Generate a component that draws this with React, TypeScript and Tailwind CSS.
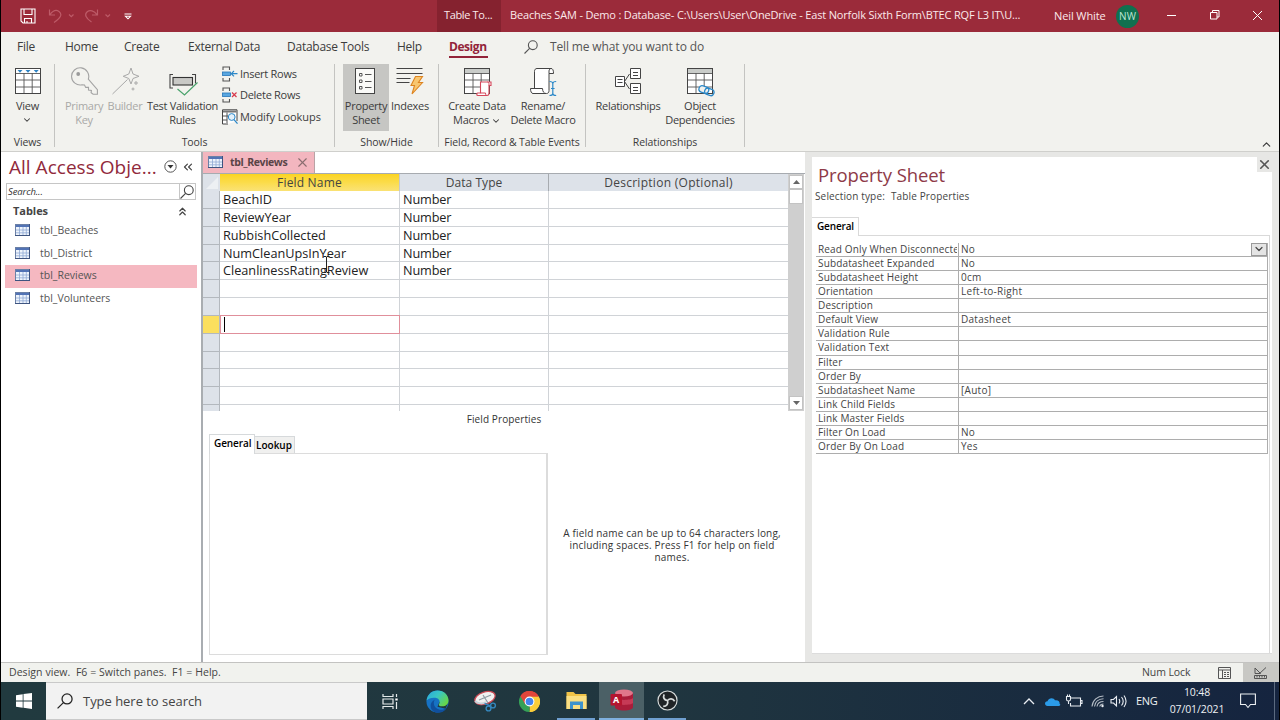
import type { ReactNode } from "react";
import { ChevronDown, ChevronUp, ChevronsLeft, ChevronsUp, X } from "lucide-react";

const fields = [
  { name: "BeachID", type: "Number" },
  { name: "ReviewYear", type: "Number" },
  { name: "RubbishCollected", type: "Number" },
  { name: "NumCleanUpsInYear", type: "Number" },
  { name: "CleanlinessRatingReview", type: "Number" },
  { name: "", type: "" },
  { name: "", type: "" },
  { name: "", type: "", current: true },
  { name: "", type: "" },
  { name: "", type: "" },
  { name: "", type: "" },
  { name: "", type: "" },
  { name: "", type: "" },
];

const properties = [
  ["Read Only When Disconnecte", "No"],
  ["Subdatasheet Expanded", "No"],
  ["Subdatasheet Height", "0cm"],
  ["Orientation", "Left-to-Right"],
  ["Description", ""],
  ["Default View", "Datasheet"],
  ["Validation Rule", ""],
  ["Validation Text", ""],
  ["Filter", ""],
  ["Order By", ""],
  ["Subdatasheet Name", "[Auto]"],
  ["Link Child Fields", ""],
  ["Link Master Fields", ""],
  ["Filter On Load", "No"],
  ["Order By On Load", "Yes"],
];

const tables = ["tbl_Beaches", "tbl_District", "tbl_Reviews", "tbl_Volunteers"];

/* ---------- icons ---------- */

function TableIcon() {
  return (
    <svg width="15" height="12" viewBox="0 0 15 12" className="mb-0.5 shrink-0">
      <rect x="0.5" y="0.5" width="14" height="11" fill="#eef4fc" stroke="#6b80a6" />
      <rect x="1" y="1" width="13" height="2" fill="#5273b5" />
      <path d="M1 6h13M1 8.8h13M4.5 3V11M8 3V11M11.3 3V11" stroke="#8fa9d4" strokeWidth="0.8" />
      <path d="M0 11.5h15M14.5 0v12" stroke="#3e5480" />
    </svg>
  );
}

function SearchIcon({ size = 14, color = "#444" }: { size?: number; color?: string }) {
  return (
    <svg width={size} height={size} viewBox="0 0 14 14" fill="none" stroke={color} strokeWidth="1.1">
      <circle cx="8.8" cy="5.2" r="4.4" />
      <path d="M5.6 8.4 0.5 13.5" />
    </svg>
  );
}

function GridIcon({ children, header = "#c9ccc9" }: { children?: ReactNode; header?: string }) {
  return (
    <svg width="30" height="30" viewBox="0 0 30 30" fill="none">
      <rect x="2.5" y="1.5" width="25" height="25" fill="#fff" stroke="#444" />
      <rect x="3" y="2" width="24" height="4" fill={header} />
      <path d="M3 6.5h24M3 13h24M3 20h24M11 6v20M19.200 6v20" stroke="#555" strokeWidth="0.9" />
      {children}
    </svg>
  );
}

function ViewIcon() {
  return (
    <GridIcon header="#fff">
      <path d="M4.500 3h5L7 5.800zM12.500 3h5L15 5.800zM20.700 3h5l-2.500 2.800z" fill="#2d83c4" />
    </GridIcon>
  );
}

function KeyIcon() {
  return (
    <svg width="30" height="30" viewBox="0 0 30 30" fill="none" stroke="#a3a3a3" strokeWidth="1.1">
      <path d="M19.300 12.200A8.600 8.600 0 1 0 13 17.800l2.500.2 1.200 2.400 2.800-.1v2.800l2.900.4-.3 2.200 2 1.600h4.300v-4.600z" />
      <circle cx="9.200" cy="7" r="1.900" fill="#9a9a9a" stroke="none" />
    </svg>
  );
}

function BuilderIcon() {
  return (
    <svg width="30" height="30" viewBox="0 0 30 30" fill="none" stroke="#a9a9a9" strokeWidth="1">
      <path d="M21 1l2 6 6 2.300-6 2.200-2 5.500-2.200-5.500-5.600-2.200 5.600-2.300z" />
      <path d="M17.500 12.500 2.500 27" />
      <path d="M26 14v4M24 16h4M23 20.500v3M21.500 22h3" />
    </svg>
  );
}

function ValidationIcon() {
  return (
    <svg width="30" height="30" viewBox="0 0 30 30" fill="none">
      <path d="M5 7.500H2v13.500h3M24 7.500h3.500v9" stroke="#444" strokeWidth="1.1" />
      <rect x="5" y="10.500" width="19.500" height="7.500" fill="#c9c9c6" stroke="#333" strokeWidth="1.1" />
      <path d="M9.500 22l7 6 13-12.500" stroke="#4aa36c" strokeWidth="1.2" />
    </svg>
  );
}

function RowsIcon({ remove = false }: { remove?: boolean }) {
  return (
    <svg width="16" height="16" viewBox="0 0 16 16" fill="none">
      <path d="M1 4V1h6.500v3M1 12v3h6.500v-3" stroke="#555" strokeWidth="1.1" />
      <rect x="0.5" y="6" width="8" height="3.5" fill="#5aa7e0" stroke="#2575b8" strokeWidth="0.8" />
      {remove ? (
        <path d="M10 5.500l4.500 4.500M14.500 5.500 10 10" stroke="#d8394c" strokeWidth="1.2" />
      ) : (
        <path d="M15.500 7.700H9.500M12 5 9.300 7.700 12 10.400" stroke="#2b88c8" strokeWidth="1.2" />
      )}
    </svg>
  );
}

function LookupIcon() {
  return (
    <svg width="16" height="16" viewBox="0 0 16 16" fill="none">
      <path d="M6 15H.5V.8h14.500V12" fill="#fff" stroke="#444" />
      <path d="M1 1.500h13.500v2H1z" fill="#777" />
      <path d="M1 7h5M1 11h4M5 3.500V14" stroke="#555" />
      <circle cx="9.700" cy="8" r="3.400" fill="#e4f1fb" stroke="#2b88c8" />
      <path d="M12 10.600l3.500 4" stroke="#2b88c8" strokeWidth="1.3" />
    </svg>
  );
}

function PropertyIcon() {
  return (
    <svg width="30" height="30" viewBox="0 0 30 30" fill="none">
      <rect x="4.5" y="1.5" width="19" height="25" fill="#fafaf8" stroke="#444" />
      <path d="M8.500 6.500h2.500V9H8.500zM8.500 13h2.500v2.500H8.500zM8.500 19.500h2.500V22H8.500z" stroke="#555" />
      <path d="M14 7.500h6.500M14 14.500h6.500M14 20.500h6.500" stroke="#555" />
    </svg>
  );
}

function IndexesIcon() {
  return (
    <svg width="30" height="30" viewBox="0 0 30 30" fill="none">
      <path d="M1.500 1.500h26M1.500 6.500h26M1.500 11.500h14M1.500 15.500h13" stroke="#444" strokeWidth="1.1" />
      <path d="M20.500 9.500h7l-4 6h4L17 27l2.500-8.500h-3.500z" fill="#f8c670" stroke="#dd8420" strokeWidth="1.1" />
    </svg>
  );
}

function MacrosIcon() {
  return (
    <GridIcon>
      <path
        d="M18.500 15H29v3.500h-2V26c0 2-1 2.500-2 2.500h-9.500c-1 0-1-2.500 0-2.500h3z"
        fill="#fff"
        stroke="#d5475b"
        strokeWidth="1.1"
      />
      <path d="M18.500 26h5c0 1.500.5 2.500 1.500 2.500M27 18.500V17c0-1-.5-2-1.500-2" stroke="#d5475b" />
    </GridIcon>
  );
}

function RenameIcon() {
  return (
    <svg width="30" height="30" viewBox="0 0 30 30" fill="none">
      <path
        d="M6.500 21.500V4.500c0-2 1-3 2.500-3h14c1.700 0 2.500 1.500 2.500 5H21v17c0 2-1 3-2.500 3H5c-1.500 0-2.500-2-2.500-5h12c0 3 1.500 5 3.500 5"
        fill="#fff"
        stroke="#444"
      />
      <path d="M21 6.500V4c0-1.500 1-2.500 2.500-2.500" stroke="#444" />
      <path
        d="M21.500 14.500c2 0 3.300.5 3.300 2v10c0 1.500-1.300 2-3.300 2M28.200 14.500c-2 0-3.400.5-3.400 2M24.800 26.500c0 1.500 1.400 2 3.400 2M23 21.500h3.600"
        stroke="#2b88c8"
        strokeWidth="1.2"
      />
    </svg>
  );
}

function RelationshipsIcon() {
  return (
    <svg width="30" height="30" viewBox="0 0 30 30" fill="none" stroke="#444">
      <path d="M2.500 9.500h9v10h-9zM17.500 1.500h10v10h-10zM17.500 16.500h10v10h-10z" fill="#fff" />
      <path d="M4.500 12.500h5M4.500 15.500h5M20 5.500h5M20 8.500h5M20 20.500h5M20 23.500h5M11.500 14.500l5-7.500M11.500 14.500l5 7.500" />
    </svg>
  );
}

function DependenciesIcon() {
  return (
    <GridIcon>
      <g fill="#f2f2ee" stroke="#2b88c8" strokeWidth="1.3">
        <rect x="14" y="19" width="10" height="6.5" rx="3.25" transform="rotate(20 18 22)" />
        <rect x="19.5" y="21.5" width="9.5" height="6.5" rx="3.25" fill="none" transform="rotate(20 24 25)" />
      </g>
    </GridIcon>
  );
}

/* ---------- title bar ---------- */

function TitleBar() {
  return (
    <div className="flex h-8 shrink-0 items-center bg-[#9b2b3a] text-[11px] text-[#fbe9eb]">
      <div className="flex w-[436px] items-center">
        <svg width="16" height="16" viewBox="0 0 16 16" fill="none" stroke="#fff" strokeWidth="1.1" className="ml-[19px]">
          <path d="M1 1h14v14H3l-2-2zM4 1v5.500h8V1M4.500 15v-4.500h7V15M7 13v2" />
        </svg>
        <svg width="26" height="16" viewBox="0 0 26 16" fill="none" stroke="#bd5b68" strokeWidth="1.2" className="ml-3">
          <path d="M1.500 1.500v5.500h5.500M1.800 6.800C5 2.500 8.500 1.700 11 3.500c3.500 2.700 2 6.500-5 11M21 6.500l2.300 2.200L25.500 6.500" />
        </svg>
        <svg width="27" height="16" viewBox="0 0 27 16" fill="none" stroke="#bd5b68" strokeWidth="1.2" className="ml-[10px]">
          <path d="M13.500 1.500v5.500H8M13.200 6.800C10 2.500 6 1.700 3.500 3.500 0 6.200 1.500 10 7.500 14M21.500 6.500l2.300 2.200L26 6.500" />
        </svg>
        <svg width="8" height="7" viewBox="0 0 8 7" fill="none" stroke="#fff" strokeWidth="1.1" className="ml-[13px]">
          <path d="M.5 1h7M1.500 3.300h5L4 5.800z" />
        </svg>
      </div>
      <div className="flex h-full w-16 items-center bg-[#85222f] pb-0.5 pl-[7px] font-medium tracking-[-0.35px] whitespace-nowrap">
        Table To...
      </div>
      <div className="ml-[9px] w-[530px] pb-0.5 tracking-[-0.17px] whitespace-nowrap">
        Beaches SAM - Demo : Database- C:\Users\User\OneDrive - East Norfolk Sixth Form\BTEC RQF L3 IT\U...
      </div>
      <div className="ml-[14px] w-[54px] tracking-[-0.1px] whitespace-nowrap">Neil White</div>
      <div className="ml-2 flex size-[23px] items-center justify-center rounded-full bg-[#10704f] text-[10px] text-[#bfe6d5]">
        NW
      </div>
      <svg width="100" height="12" viewBox="0 0 100 12" fill="none" stroke="#fff" className="mb-0.5 ml-[28px]">
        <path d="M0 6.500h9M43.500 3.500h6.500v6.500h-6.500zM45.500 3.500v-2h6.500v6.500h-2M86 2l9 9M95 2l-9 9" />
      </svg>
    </div>
  );
}

/* ---------- ribbon ---------- */

function RibbonTabs() {
  return (
    <div className="flex h-[29px] items-center text-[12px] tracking-[-0.25px] whitespace-nowrap text-[#3c3c3c]">
      <span className="ml-4 w-12">File</span>
      <span className="w-[59px]">Home</span>
      <span className="w-16">Create</span>
      <span className="w-[99px]">External Data</span>
      <span className="w-[110px]">Database Tools</span>
      <span className="w-[52px]">Help</span>
      <span className="flex h-[29px] w-[39px] flex-col font-bold tracking-[-0.45px] text-[#93243a]">
        <span className="mt-px flex h-[23px] items-center pt-1">Design</span>
        <span className="h-0.5 bg-[#93243a]" />
      </span>
      <span className="ml-9 w-[26px]">
        <SearchIcon color="#555" />
      </span>
      <span className="tracking-[-0.14px] text-[#555]">Tell me what you want to do</span>
    </div>
  );
}

function RibbonGroup({ label, className, children }: { label: string; className: string; children: ReactNode }) {
  return (
    <div className={`flex h-[83px] shrink-0 flex-col border-r border-[#c4c4c1] ${className}`}>
      <div className="flex h-[71px] shrink-0 items-start">{children}</div>
      <div className="text-center text-[10.5px] leading-[14px] tracking-[-0.08px] whitespace-nowrap">{label}</div>
    </div>
  );
}

function RibbonButton({
  icon,
  lines,
  className,
  menu,
}: {
  icon: ReactNode;
  lines: string[];
  className: string;
  menu?: boolean;
}) {
  return (
    <div className={`flex h-[67px] shrink-0 flex-col items-center pt-[3px] whitespace-nowrap ${className}`}>
      {icon}
      <div className="mt-px flex flex-col items-center">
        {lines.map((line, i) => (
          <span key={line} className="flex h-[14.5px] items-center leading-[15px]">
            {line}
            {menu && i === lines.length - 1 && i > 0 && (
              <ChevronDown size={10} strokeWidth={2.5} className="mt-0.5 ml-0.5" />
            )}
          </span>
        ))}
        {menu && lines.length === 1 && <ChevronDown size={10} strokeWidth={2.5} className="mt-0.5" />}
      </div>
    </div>
  );
}

function Ribbon() {
  return (
    <div className="flex h-[119px] shrink-0 flex-col bg-[#f2f2ee]">
      <RibbonTabs />
      <div className="mt-[3px] flex h-[87px] text-[11px] tracking-[-0.28px] text-[#3c3c3c]">
        <RibbonGroup label="Views" className="w-[54px]">
          <RibbonButton icon={<ViewIcon />} lines={["View"]} className="w-[53px]" menu />
        </RibbonGroup>
        <RibbonGroup label="Tools" className="w-[280px]">
          <RibbonButton icon={<KeyIcon />} lines={["Primary", "Key"]} className="ml-[9px] w-10 text-[#a9a9a7]" />
          <RibbonButton icon={<BuilderIcon />} lines={["Builder"]} className="ml-px w-10 text-[#a9a9a7]" />
          <RibbonButton icon={<ValidationIcon />} lines={["Test Validation", "Rules"]} className="w-[75px]" />
          <div className="-mt-px ml-0.5 flex flex-col whitespace-nowrap">
            <div className="flex h-[21.5px] items-center gap-0.5">
              <RowsIcon /> Insert Rows
            </div>
            <div className="flex h-[21.5px] items-center gap-0.5">
              <RowsIcon remove /> Delete Rows
            </div>
            <div className="flex h-[21.5px] items-center gap-0.5 tracking-[-0.05px]">
              <LookupIcon /> Modify Lookups
            </div>
          </div>
        </RibbonGroup>
        <RibbonGroup label="Show/Hide" className="w-[104px]">
          <RibbonButton icon={<PropertyIcon />} lines={["Property", "Sheet"]} className="ml-2 w-[46px] bg-[#c6c6c3]" />
          <RibbonButton icon={<IndexesIcon />} lines={["Indexes"]} className="w-[42px]" />
        </RibbonGroup>
        <RibbonGroup label="Field, Record & Table Events" className="w-[147px]">
          <RibbonButton icon={<MacrosIcon />} lines={["Create Data", "Macros"]} className="ml-2 w-[60px]" menu />
          <RibbonButton icon={<RenameIcon />} lines={["Rename/", "Delete Macro"]} className="ml-0.5 w-[68px]" />
        </RibbonGroup>
        <RibbonGroup label="Relationships" className="w-[159px]">
          <RibbonButton icon={<RelationshipsIcon />} lines={["Relationships"]} className="ml-[7px] w-[70px]" />
          <RibbonButton icon={<DependenciesIcon />} lines={["Object", "Dependencies"]} className="ml-px w-[72px]" />
        </RibbonGroup>
        <div className="flex flex-1 items-end justify-end pr-1.5">
          <ChevronUp size={13} strokeWidth={2.2} />
        </div>
      </div>
    </div>
  );
}

/* ---------- navigation pane ---------- */

function NavPane() {
  return (
    <div className="flex w-[200px] shrink-0 flex-col bg-white">
      <div className="flex h-[31px] items-center pl-2">
        <span className="w-[155px] text-[19px] tracking-[0.02px] whitespace-nowrap text-[#912a3c]">All Access Obje...</span>
        <svg width="13" height="13" viewBox="0 0 13 13" fill="none" stroke="#555" className="mb-0.5">
          <circle cx="6.5" cy="6.5" r="5.7" />
          <path d="M3.500 5h6l-3 3.500z" fill="#333" stroke="none" />
        </svg>
        <ChevronsLeft size={14} strokeWidth={2} color="#444" className="mb-0.5 ml-1" />
      </div>
      <div className="ml-[5px] flex h-[17px] w-[190px] items-center border border-[#c6c6c6]">
        <span className="w-[173px] border-r border-[#c6c6c6] pl-px text-[9.5px] leading-[15px] tracking-[-0.1px] text-[#333] italic">
          Search...
        </span>
        <span>
          <SearchIcon />
        </span>
      </div>
      <div className="flex h-[21px] items-center pt-px pl-3">
        <span className="w-[163px] text-[11px] font-bold tracking-[-0.05px] text-[#444]">Tables</span>
        <ChevronsUp size={13} strokeWidth={2.2} color="#444" />
      </div>
      <div className="-mt-px flex flex-col">
        {tables.map((name) => (
          <div
            key={name}
            className={`ml-1 flex h-[22.5px] w-48 items-center gap-[10px] pl-[10px] text-[10.5px] text-[#555] ${
              name === "tbl_Reviews" ? "bg-[#f5b8c1]" : ""
            }`}
          >
            <TableIcon />
            {name}
          </div>
        ))}
      </div>
    </div>
  );
}

/* ---------- table design grid ---------- */

function DesignGrid() {
  return (
    <div className="flex h-[238px] shrink-0 overflow-hidden border-t border-[#a7abb0]">
      <div className="flex w-[585px] flex-col text-[12.7px] text-[#222]">
        <div className="flex h-[17px] shrink-0 bg-[#dde2e9] text-[12px] leading-[17px] text-[#444]">
          <div className="flex w-[17px] items-center justify-center">
            <svg width="12" height="12" viewBox="0 0 12 12">
              <path d="M12 0v12H0z" fill="#edf0f3" />
            </svg>
          </div>
          <div className="w-[180px] border-r border-[#c4c8cd] bg-linear-to-b from-[#fbd41f] via-[#fbdc4a] to-[#fae274] text-center tracking-[0.18px]">
            Field Name
          </div>
          <div className="w-[149px] border-r border-[#a7abb0] text-center tracking-[0.06px]">Data Type</div>
          <div className="w-[239px] text-center tracking-[0.28px]">Description (Optional)</div>
        </div>
        {fields.map((field, i) => (
          <div key={i} className="flex h-[17.85px] shrink-0 leading-[17.5px]">
            <div
              className={`w-[17px] border-r border-b border-[#b3b8be] ${field.current ? "bg-[#fbdf5e]" : "bg-[#dde2e9]"}`}
            />
            {field.current ? (
              <div className="z-10 -mt-px h-[19px] w-[180px] border-[1.5px] border-[#e08f9b] bg-white pt-px pl-[3px]">
                <div className="h-[15px] w-px bg-black" />
              </div>
            ) : (
              <div className="w-[180px] border-r border-b border-[#d0d3d7] pl-[3px]">{field.name}</div>
            )}
            <div className="w-[149px] border-r border-b border-[#d0d3d7] pl-[3px] tracking-[-0.12px]">{field.type}</div>
            <div className="w-[239px] border-b border-[#d0d3d7]" />
          </div>
        ))}
      </div>
      <div className="flex w-4 flex-col items-center justify-between bg-[#cfcfcf] pt-px pb-px">
        <div className="flex flex-col">
          <div className="flex h-[14px] w-[14px] items-center justify-center border border-[#c3c3c3] bg-white">
            <svg width="7" height="4" viewBox="0 0 7 4">
              <path d="M3.500 0 7 4H0z" fill="#666" />
            </svg>
          </div>
          <div className="h-[15px] w-[14px] border border-[#c3c3c3] bg-white" />
        </div>
        <div className="flex h-[14px] w-[14px] items-center justify-center border border-[#c3c3c3] bg-white">
          <svg width="7" height="4" viewBox="0 0 7 4">
            <path d="M0 0h7L3.500 4z" fill="#666" />
          </svg>
        </div>
      </div>
    </div>
  );
}

function FieldProperties() {
  return (
    <div className="flex flex-1 flex-col bg-white text-[10px] text-[#333]">
      <div className="h-[22px] pt-px text-center leading-[15px] tracking-[0.1px]">Field Properties</div>
      <div className="flex">
        <div className="ml-[6px] w-[339px]">
          <div className="flex h-5 items-end font-semibold text-black">
            <div className="z-10 -mb-px h-5 w-[46px] border border-b-0 border-[#d6d9db] bg-white pl-[4px] leading-[17px] tracking-[-0.1px]">
              General
            </div>
            <div className="h-[17px] w-[40px] border border-b-0 border-l-0 border-[#d6d9db] bg-[#f0f0ef] pl-px leading-[16px]">
              Lookup
            </div>
          </div>
          <div className="h-[202px] border border-r-2 border-[#dcdcdc]" />
        </div>
        <div className="mt-[94px] ml-2 w-[232px] text-center leading-[12px] tracking-[0.18px]">
          A field name can be up to 64 characters long,
          <br />
          including spaces. Press F1 for help on field
          <br />
          names.
        </div>
      </div>
    </div>
  );
}

function DocumentArea() {
  return (
    <div className="flex w-[604px] shrink-0 flex-col border-l-2 border-[#a9adb1] bg-white">
      <div className="flex h-[21px] w-[112px] items-center border-r border-[#b9a3a6] bg-[#f3b6bf] pl-[5px]">
        <TableIcon />
        <span className="ml-[7px] w-[58px] text-[10.5px] font-bold tracking-[-0.38px] text-[#5a4447]">tbl_Reviews</span>
        <X size={15} strokeWidth={1.8} color="#8b6c70" className="ml-[7px]" />
      </div>
      <DesignGrid />
      <FieldProperties />
    </div>
  );
}

/* ---------- property sheet ---------- */

function PropertySheet() {
  return (
    <div className="flex flex-1 bg-[#e7e7e5] pt-[5px] pr-[7px] pb-2 pl-[7px]">
      <div className="flex flex-1 flex-col border-b border-[#dcdcdc] bg-white">
        <div className="flex h-[31px] justify-between pl-[6px]">
          <span className="pt-[5px] text-[18.5px] leading-[26px] tracking-[-0.12px] text-[#8e3a48]">Property Sheet</span>
          <span className="flex size-[15px] items-center justify-center bg-[#e7e7e5]">
            <X size={15} strokeWidth={2.6} color="#555" />
          </span>
        </div>
        <div className="flex h-[29px] gap-[6px] pl-[3px] text-[10px] leading-[17px] tracking-[0.14px] whitespace-nowrap text-[#444]">
          <span>Selection type:</span>
          <span>Table Properties</span>
        </div>
        <div className="flex h-[19px]">
          <div className="w-[47px] border border-b-0 border-l-0 border-[#d9d9d9] pl-[5px] text-[10px] leading-[17px] font-semibold tracking-[-0.15px] text-black">
            General
          </div>
          <div className="mr-0.5 flex-1 border-b border-[#d9d9d9]" />
        </div>
        <div className="mr-0.5 flex-1 border-r border-[#d9d9d9] pt-[7px] pl-[4px] text-[10px] tracking-[0.15px] text-[#444]">
          {properties.map(([label, value], i) => (
            <div key={label} className="flex h-[14.07px] w-[452px] border-b border-[#adadad] leading-[13.5px]">
              <div className="w-[143px] border-r border-[#adadad] pl-0.5">
                <div className="w-[139px] overflow-hidden whitespace-nowrap">{label}</div>
              </div>
              <div className="flex flex-1 justify-between border-r border-[#adadad] pl-0.5 tracking-[0.28px]">
                {value}
                {i === 0 && (
                  <span className="flex h-[13px] w-[16px] items-end justify-center border border-[#9a9a9a] bg-[#e4e4e4]">
                    <ChevronDown size={12} strokeWidth={2.4} />
                  </span>
                )}
              </div>
            </div>
          ))}
        </div>
      </div>
    </div>
  );
}

/* ---------- status bar and taskbar ---------- */

function StatusBar() {
  return (
    <div className="flex h-5 shrink-0 items-center border-t border-[#c3c3c1] bg-[#f1f2ee] text-[10.5px] whitespace-pre text-[#444]">
      <span className="ml-2 flex-1 tracking-[0.05px]">{"Design view.  F6 = Switch panes.  F1 = Help."}</span>
      <span className="w-[76px] tracking-[-0.1px]">Num Lock</span>
      <svg width="13" height="12" viewBox="0 0 13 12" fill="none" stroke="#555">
        <path d="M.5.5h12v11H.5zM.5 3h12M4.500 3v8.500M6 5.500h2M9 5.500h2M6 7.500h2M9 7.500h2M6 9.500h2M9 9.500h2" />
      </svg>
      <span className="ml-3 flex h-full w-9 items-center justify-center bg-[#c8c8c4] pr-0.5">
        <svg width="13" height="12" viewBox="0 0 13 12" fill="none" stroke="#555">
          <path d="M.5 8.500h12v3H.5zM3 9v1.500M5.500 9v1.500M8 9v1.500M10.500 9v1.500M1 1v5.500h5.500zM5 7l7-6.500" />
        </svg>
      </span>
    </div>
  );
}

function TaskbarApps() {
  return (
    <div className="flex h-full items-center text-white">
      <div className="flex w-[45px] items-center justify-center">
        <svg width="16" height="15" viewBox="0 0 16 15" fill="none" stroke="#e4eaea" strokeWidth="1.2">
          <path d="M1 0v2.500h10V0M1 15v-2.500h10V15M1 5h10v5H1zM14.500 0v3M14.500 8v7" />
          <path d="M13.300 4.500h2.400v2h-2.400z" fill="#fff" stroke="none" />
        </svg>
      </div>
      <div className="flex w-[51px] items-center justify-center">
        <svg width="23" height="23" viewBox="0 0 24 24">
          <defs>
            <linearGradient id="edgeTop" x1="0" y1="0" x2="1" y2="0.6">
              <stop offset="0" stopColor="#2aa6dd" />
              <stop offset="0.5" stopColor="#38c6c5" />
              <stop offset="1" stopColor="#66d64a" />
            </linearGradient>
          </defs>
          <circle cx="12" cy="12" r="11.5" fill="#1672c4" />
          <path d="M23.500 12l-3 7.500L12 17.500l2-5z" fill="#213a3f" />
          <path
            d="M.6 11C1.500 4.500 6 .5 12 .5c7 0 11.500 5 11.500 10.500 0 4-3 6-6.500 6-3 0-4-1-3.500-2 1.500-2 1-6-3.500-6.800C6 7.600 2.500 9 .6 11z"
            fill="url(#edgeTop)"
          />
          <path d="M9.500 10c-3 3-1 9.500 5 10.500 2.500.4 5-.5 7-1.500-3 4.500-8 5.500-12 4.200C3.500 21 3 13 9.500 10z" fill="#104f9c" />
        </svg>
      </div>
      <div className="flex w-[43px] items-center justify-center">
        <svg width="24" height="22" viewBox="0 0 24 22" fill="none">
          <ellipse cx="12" cy="8" rx="10.5" ry="6" fill="#f1f1f1" stroke="#c94a55" strokeWidth="1.3" transform="rotate(-18 12 8)" />
          <path d="M6 10l12-5M10 5l5 8" stroke="#8f9aa3" strokeWidth="1.2" />
          <path d="M2 11c3 3 8 3 11 1" stroke="#c9d2d8" strokeWidth="2" />
          <circle cx="15.5" cy="18.5" r="2.4" stroke="#3587bd" strokeWidth="1.4" />
          <circle cx="20" cy="15.5" r="2.4" stroke="#3587bd" strokeWidth="1.4" />
          <path d="M11.500 13.500l6 2.500" stroke="#3587bd" strokeWidth="1.4" />
        </svg>
      </div>
      <div className="flex w-[47px] items-center justify-center">
        <svg width="21" height="21" viewBox="0 0 24 24">
          <path d="M12 12 1.600 6A12 12 0 0 1 22.400 6z" fill="#e2463b" />
          <path d="M12 12 22.400 6A12 12 0 0 1 12 24z" fill="#fbcd3a" />
          <path d="M12 12v12A12 12 0 0 1 1.600 6z" fill="#35a057" />
          <path d="M12 6.500h10.600A12 12 0 0 0 1.600 6l5.400 9z" fill="#e2463b" />
          <path d="M17 15 12 24A12 12 0 0 0 22.600 6.500H12z" fill="#fbcd3a" />
          <circle cx="12" cy="12" r="5.6" fill="#fff" />
          <circle cx="12" cy="12" r="4.4" fill="#4484ee" />
        </svg>
      </div>
      <div className="flex h-full w-[46px] flex-col">
        <div className="flex h-9 items-center justify-center">
          <svg width="21" height="19" viewBox="0 0 21 19">
            <path d="M.5 1h7l2 2h11v15H.5z" fill="#f0c348" />
            <path d="M.5 5h20v13H.5z" fill="#fadf83" />
            <path d="M4 10.500h13V18h-3v-4H7v4H4z" fill="#3e93cc" />
          </svg>
        </div>
        <div className="mx-1 h-0.5 bg-[#6f9fd0]" />
      </div>
      <div className="flex h-full w-[45px] flex-col bg-[#4b6066]">
        <div className="flex h-9 items-center justify-center">
          <svg width="24" height="22" viewBox="0 0 24 22">
            <path d="M5 4v14c0 2 4 3.500 9 3.500s9-1.500 9-3.500V4z" fill="#a91d3a" />
            <path d="M5 9c2 2.500 16 2.500 18 0v5c-2 2.500-16 2.500-18 0z" fill="#c63a56" />
            <ellipse cx="14" cy="4" rx="9" ry="3.5" fill="#e0768a" />
            <rect x="0.5" y="5" width="11.5" height="11.5" rx="1" fill="#b5152f" />
            <text x="6.2" y="14" textAnchor="middle" fontSize="9" fontWeight="700" fill="#fff">
              A
            </text>
          </svg>
        </div>
        <div className="h-0.5 bg-[#7fb0de]" />
      </div>
      <div className="flex h-full w-[46px] flex-col">
        <div className="flex h-9 items-center justify-center">
          <svg width="21" height="21" viewBox="0 0 22 22" fill="none">
            <circle cx="11" cy="11" r="10" fill="#1f2326" stroke="#d6dada" strokeWidth="1.2" />
            <path
              d="M11 11c-3.500-.5-5-3-3.500-6.500M11 11c2.500-2.500 5.500-2.200 7.500.8M11 11c1 3.500-.8 6-4.500 6.200"
              stroke="#d6dada"
              strokeWidth="1.8"
            />
          </svg>
        </div>
        <div className="mx-1 h-0.5 bg-[#6f9fd0]" />
      </div>
    </div>
  );
}

function Taskbar() {
  return (
    <div className="flex h-[38px] shrink-0 items-center bg-linear-to-r from-[#213a3f] via-[#20363f] to-[#15243f] text-[#eef1f3]">
      <div className="flex w-[45px] items-center justify-center">
        <svg width="16" height="16" viewBox="0 0 16 16" fill="#fff">
          <path d="M0 2.200 6.700 1.200v6.400H0zM7.500 1.100 16 0v7.600H7.500zM0 8.400h6.700v6.400L0 13.800zM7.500 8.400H16V16l-8.500-1.200z" />
        </svg>
      </div>
      <div className="flex h-full w-[321px] items-center border-y border-[#c9c9c9] bg-[#f2f2f2] pl-[11px] text-[13px] tracking-[-0.03px] text-[#444]">
        <SearchIcon size={16} color="#222" />
        <span className="mt-0.5 ml-[10px]">Type here to search</span>
      </div>
      <TaskbarApps />
      <div className="flex h-full flex-1 items-center justify-end">
        <svg width="105" height="16" viewBox="0 0 105 16" fill="none" stroke="#e9edf2" strokeWidth="1.1">
          <path d="M1 11l5-5 5 5" strokeWidth="1.3" />
          <path
            d="M24.500 13c-3 0-3.500-4.500 0-4.700 1-4 6.500-4 7.500-1 3-.5 5 1 4.500 3.200 1.500 1 .5 2.500-1 2.500z"
            fill="#2b9be8"
            stroke="none"
          />
          <path d="M48 5h9.500v8h-10v-3M57.500 7.500H59v3h-1.500" />
          <path d="M43.500 3.500h4v3c0 2-4 2-4 0zM44.500 1.500v2M46.500 1.500v2M45.500 8v3" />
          <path
            d="M69 13.500C69.500 7 74.500 3 80.500 3M71.500 13.500c.5-4.500 4-7.700 9-7.800M74 13.500c.5-3 3-5 6.500-5M76.700 13.500c.3-1.500 1.800-2.500 3.800-2.500"
            opacity="0.75"
          />
          <circle cx="79.5" cy="13" r="1.2" fill="#e9edf2" stroke="none" />
          <path d="M88 6.500h2.500l3-3v9.500l-3-3H88zM96 6c1 1.500 1 3 0 4.500M98.500 4c2 2.500 2 6 0 8.500M101 2.500c2.500 3.500 2.500 8 0 11.500" />
        </svg>
        <span className="ml-2 w-[22px] text-[11px] tracking-[-0.3px]">ENG</span>
        <div className="ml-[11px] flex w-[56px] flex-col items-center text-[10.5px] leading-[17px] tracking-[-0.15px]">
          <span>10:48</span>
          <span className="tracking-[-0.1px]">07/01/2021</span>
        </div>
        <svg width="16" height="16" viewBox="0 0 16 16" fill="none" stroke="#eef1f3" strokeWidth="1.1" className="mr-[18px] ml-[15px]">
          <path d="M.6 1h14.800v10.500H10.500L8 14.500l-2.500-3H.6z" />
        </svg>
        <div className="mr-1 h-full w-px bg-[#5b6a80]" />
      </div>
    </div>
  );
}

export default function App() {
  return (
    <div className="relative flex h-[720px] w-[1280px] flex-col overflow-hidden border-x border-black bg-white font-['Open_Sans','Noto_Sans',sans-serif]">
      <TitleBar />
      <Ribbon />
      <div className="flex h-[511px] shrink-0 border-t border-[#cfcfcc]">
        <NavPane />
        <DocumentArea />
        <PropertySheet />
      </div>
      <StatusBar />
      <Taskbar />

      {/* text cursor of the mouse */}
      <svg width="9" height="17" viewBox="0 0 9 17" fill="none" stroke="#222" className="absolute top-[256px] left-[321px]">
        <path d="M1.500.5h2.500l.5.8.5-.8h2.500M4.500 1v15M1.500 16.500h2.500l.5-.8.5.8h2.500" />
      </svg>
    </div>
  );
}
